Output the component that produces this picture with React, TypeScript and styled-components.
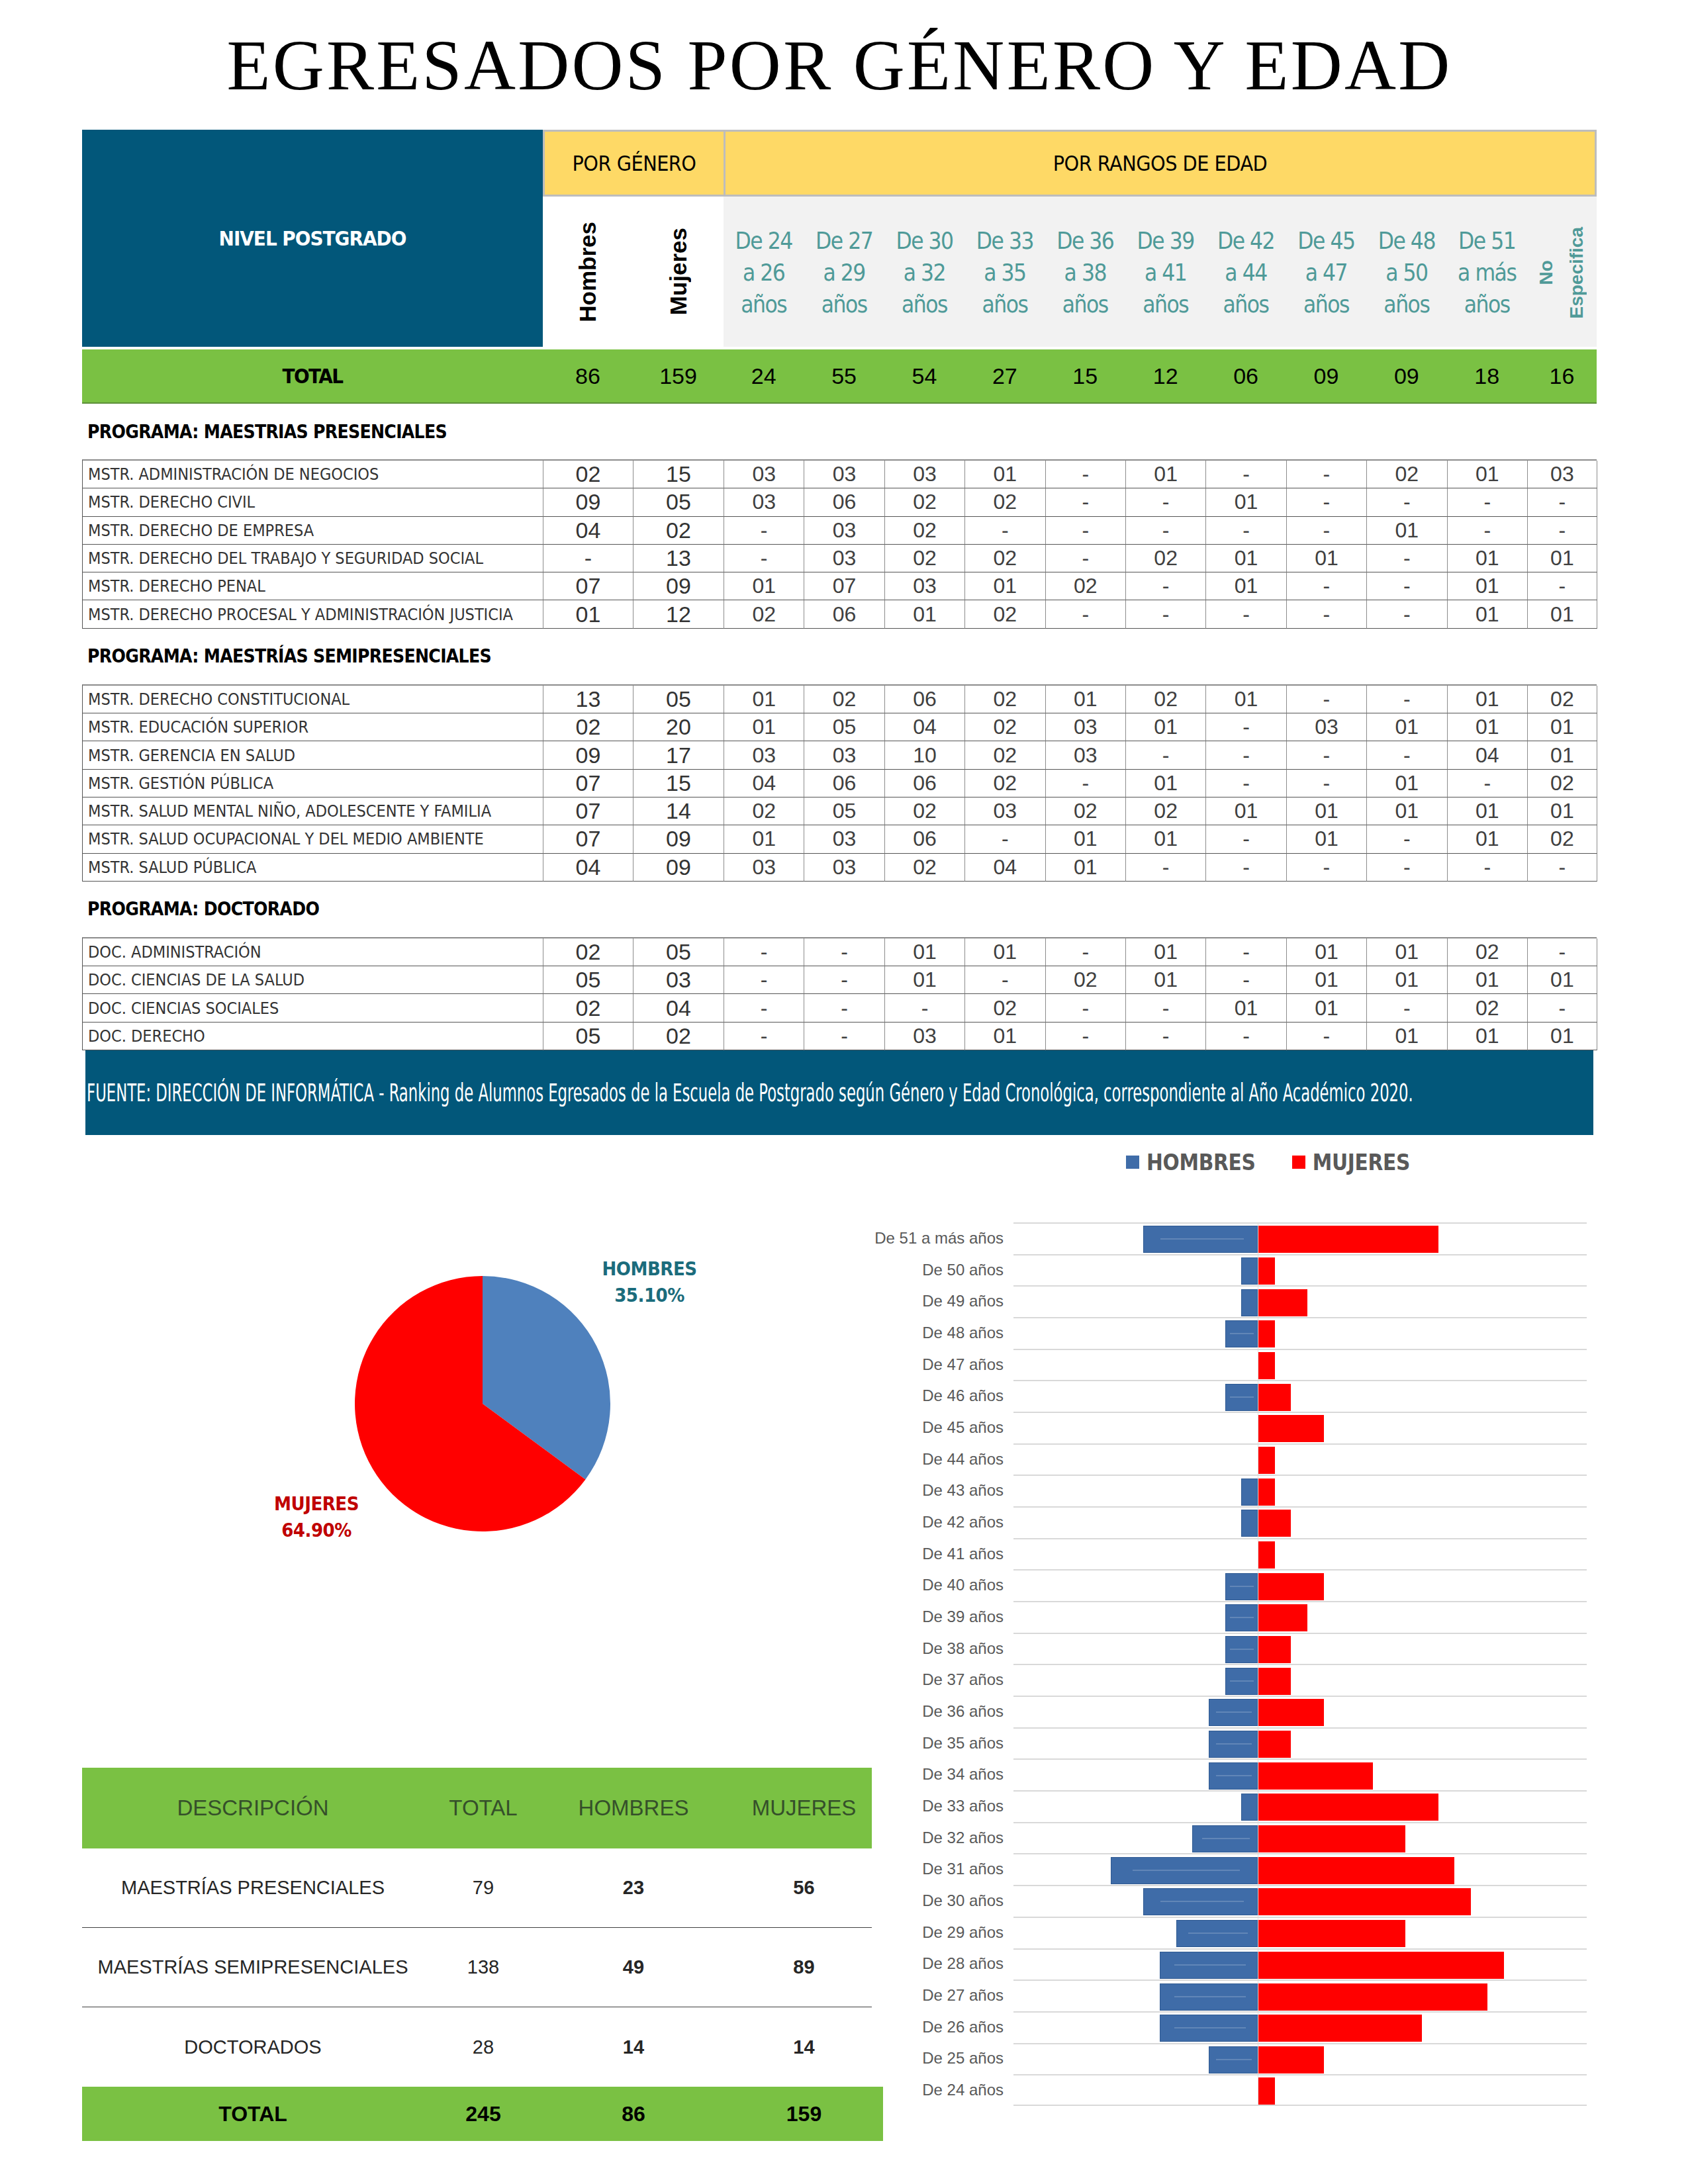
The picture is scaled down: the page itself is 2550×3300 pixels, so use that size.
import React from "react";
import styled, { createGlobalStyle } from "styled-components";

const NARROW = `"Liberation Sans Narrow", "Arial Narrow", "DejaVu Sans Condensed", sans-serif`;
const SANS = `"Liberation Sans", Arial, sans-serif`;
const COLS = "696px 136px 137px repeat(10, 121.4px) 105px";
const NAVY = "#02577a";
const TEAL = "#4f9a98";
const GREEN = "#7ac143";
const YELLOW = "#fed966";

const GlobalStyle = createGlobalStyle`
  html, body { margin: 0; padding: 0; background: #ffffff; }
  body { font-family: ${SANS}; }
`;

const Page = styled.div`
  width: 2550px;
  min-height: 3300px;
  box-sizing: border-box;
  padding: 45px 138px 0 124px;
  background: #fff;
`;

const Title = styled.h1`
  margin: 0 0 43px;
  font-family: "Liberation Serif", "Times New Roman", serif;
  font-weight: 400;
  font-size: 108px;
  line-height: 108px;
  letter-spacing: 3.3px;
  text-align: center;
  color: #000;
`;

/* ---------- header ---------- */
const HeaderGrid = styled.div`
  display: grid;
  grid-template-columns: ${COLS};
  grid-template-rows: 101px 227px;
`;

const NivelCell = styled.div`
  grid-row: 1 / span 2;
  background: ${NAVY};
  color: #fff;
  display: flex;
  align-items: center;
  justify-content: center;
  font-family: ${NARROW};
  font-weight: 700;
  font-size: 31px;
  letter-spacing: -1px;
`;

const GroupCell = styled.div<{ $span: number; $last?: boolean }>`
  grid-column: span ${(p) => p.$span};
  background: ${YELLOW};
  box-sizing: border-box;
  border-top: 3px solid #bdbdbd;
  border-bottom: 3px solid #bdbdbd;
  border-left: 3px solid #bdbdbd;
  border-right: ${(p) => (p.$last ? "3px solid #bdbdbd" : "none")};
  display: flex;
  align-items: center;
  justify-content: center;
  font-family: ${NARROW};
  font-size: 32px;
  color: #000;
  letter-spacing: -0.5px;
`;

const GenderHead = styled.div`
  background: #fff;
  display: flex;
  align-items: center;
  justify-content: center;
`;

const AgeHead = styled.div`
  background: #f2f2f2;
  display: flex;
  flex-direction: column;
  align-items: center;
  justify-content: center;
  font-family: ${NARROW};
  font-size: 35px;
  line-height: 48px;
  letter-spacing: -1.5px;
  color: ${TEAL};
  padding-top: 3px;
`;

const Vertical = styled.span<{ $teal?: boolean }>`
  writing-mode: vertical-rl;
  transform: rotate(180deg);
  font-family: ${SANS};
  font-weight: 700;
  font-size: ${(p) => (p.$teal ? 28 : 35)}px;
  line-height: ${(p) => (p.$teal ? 46 : 40)}px;
  letter-spacing: 0;
  color: ${(p) => (p.$teal ? TEAL : "#000")};
  text-align: center;
  white-space: nowrap;
`;

const TotalRow = styled.div`
  display: grid;
  grid-template-columns: ${COLS};
  height: 82px;
  margin-top: 4px;
  box-sizing: border-box;
  background: ${GREEN};
  border-bottom: 2px solid #5d8f3a;
  align-items: center;
`;

const TotalLabel = styled.div`
  text-align: center;
  font-family: ${NARROW};
  font-weight: 700;
  font-size: 31px;
  color: #000;
  letter-spacing: -1.5px;
`;

const TotalNum = styled.div`
  text-align: center;
  font-family: ${SANS};
  font-size: 34px;
  color: #000;
`;

/* ---------- program tables ---------- */
const SectionTitle = styled.div`
  height: 84px;
  box-sizing: border-box;
  display: flex;
  align-items: center;
  padding-left: 8px;
  font-family: ${NARROW};
  font-weight: 700;
  font-size: 28px;
  color: #000;
  letter-spacing: -0.7px;
`;

const DataTable = styled.div`
  display: grid;
  grid-template-columns: ${COLS};
  grid-auto-rows: 42.3px;
  border-top: 2px solid #8c8c8c;
  border-left: 1px solid #555;
`;

const Cell = styled.div<{ $kind: "name" | "gender" | "age" }>`
  box-sizing: border-box;
  border-right: 1px solid #8c8c8c;
  border-bottom: 1.5px solid #555;
  display: flex;
  align-items: center;
  justify-content: ${(p) => (p.$kind === "name" ? "flex-start" : "center")};
  padding-left: ${(p) => (p.$kind === "name" ? "8px" : "0")};
  white-space: nowrap;
  overflow: hidden;
  font-family: ${(p) => (p.$kind === "name" ? NARROW : SANS)};
  font-size: ${(p) => (p.$kind === "name" ? 25 : p.$kind === "gender" ? 34 : 32)}px;
  color: ${(p) => (p.$kind === "age" ? "#404040" : "#333")};
`;

const SourceBar = styled.div`
  margin: 0 5px;
  height: 128px;
  background: ${NAVY};
  display: flex;
  align-items: center;
  overflow: hidden;
`;

const SourceText = styled.span`
  display: inline-block;
  padding-left: 3px;
  font-family: ${NARROW};
  font-size: 37px;
  color: #fff;
  white-space: nowrap;
  transform: scaleX(0.683);
  transform-origin: left center;
`;

/* ---------- lower part ---------- */
const Lower = styled.div`
  display: grid;
  grid-template-columns: 1193px 1090px;
  column-gap: 5px;
`;

const LeftCol = styled.div`
  display: flex;
  flex-direction: column;
`;

const PieBox = styled.div`
  height: 956px;
`;

const SumRow = styled.div<{ $variant: "head" | "body" | "total"; $divider?: boolean }>`
  display: grid;
  grid-template-columns: 516px 180px 274px 223px;
  align-items: center;
  box-sizing: border-box;
  height: ${(p) => (p.$variant === "head" ? 122 : p.$variant === "total" ? 82 : 120)}px;
  background: ${(p) => (p.$variant === "body" ? "#fff" : GREEN)};
  margin-right: ${(p) => (p.$variant === "total" ? "-17px" : "0")};
  border-bottom: ${(p) => (p.$divider ? "1.5px solid #404040" : "none")};
`;

const SumCell = styled.div<{ $variant: "head" | "body" | "total"; $bold?: boolean; $end?: boolean }>`
  text-align: center;
  font-family: ${SANS};
  white-space: nowrap;
  padding-left: ${(p) => (p.$end ? "18px" : "0")};
  font-size: ${(p) => (p.$variant === "head" ? 33 : p.$variant === "total" ? 32 : 29)}px;
  font-weight: ${(p) => (p.$variant === "total" || p.$bold ? 700 : 400)};
  color: ${(p) => (p.$variant === "head" ? "#35502a" : p.$variant === "total" ? "#000" : "#262626")};
`;

const RightCol = styled.div`
  display: flex;
  flex-direction: column;
`;

const Legend = styled.div`
  margin-top: 21px;
  height: 40px;
  padding-left: 379px;
  display: flex;
  align-items: center;
  gap: 55px;
`;

const LegendItem = styled.div`
  display: flex;
  align-items: center;
  gap: 11px;
  font-family: ${NARROW};
  font-weight: 700;
  font-size: 33px;
  letter-spacing: -0.3px;
  color: #595959;
`;

const Swatch = styled.span<{ $color: string }>`
  width: 20px;
  height: 20px;
  background: ${(p) => p.$color};
  display: inline-block;
`;

const Chart = styled.div`
  margin-top: 71px;
  display: grid;
  grid-template-columns: 194px 866px;
  column-gap: 15px;
  grid-auto-rows: 47.68px;
`;

const BarLabel = styled.div`
  display: flex;
  align-items: center;
  justify-content: flex-end;
  font-family: ${SANS};
  font-size: 24px;
  color: #595959;
  white-space: nowrap;
`;

const Plot = styled.div<{ $last?: boolean }>`
  box-sizing: border-box;
  border-top: 2px solid #d9d9d9;
  border-bottom: ${(p) => (p.$last ? "2px solid #d9d9d9" : "none")};
  display: grid;
  grid-template-columns: 370px 1fr;
`;

const Half = styled.div<{ $left?: boolean }>`
  display: flex;
  align-items: center;
  justify-content: ${(p) => (p.$left ? "flex-end" : "flex-start")};
  border-right: ${(p) => (p.$left ? "1px solid #e3e3e3" : "none")};
  padding-top: 2px;
`;

const UNIT = 24.7;

const Bar = styled.div<{ $value: number; $male?: boolean }>`
  position: relative;
  height: 41px;
  width: ${(p) => p.$value * UNIT}px;
  background: ${(p) => (p.$male ? "#3f6ca8" : "#ff0000")};
  box-shadow: ${(p) => (p.$male ? "inset 0 0 0 1px #2f5a92" : "none")};
  &::after {
    content: "";
    display: ${(p) => (p.$male && p.$value > 1 ? "block" : "none")};
    position: absolute;
    left: 15%;
    right: 12%;
    top: 19px;
    height: 2px;
    background: rgba(255, 255, 255, 0.18);
  }
`;

/* ---------- data ---------- */
type Row = [string, ...string[]];

const AGE_HEADS: [string, string][] = [
  ["24", "26"], ["27", "29"], ["30", "32"], ["33", "35"], ["36", "38"],
  ["39", "41"], ["42", "44"], ["45", "47"], ["48", "50"], ["51", "más"],
];

const TOTALS = ["86", "159", "24", "55", "54", "27", "15", "12", "06", "09", "09", "18", "16"];

const PRESENCIALES: Row[] = [
  ["MSTR. ADMINISTRACIÓN DE NEGOCIOS", "02", "15", "03", "03", "03", "01", "-", "01", "-", "-", "02", "01", "03"],
  ["MSTR. DERECHO CIVIL", "09", "05", "03", "06", "02", "02", "-", "-", "01", "-", "-", "-", "-"],
  ["MSTR. DERECHO DE EMPRESA", "04", "02", "-", "03", "02", "-", "-", "-", "-", "-", "01", "-", "-"],
  ["MSTR. DERECHO DEL TRABAJO Y SEGURIDAD SOCIAL", "-", "13", "-", "03", "02", "02", "-", "02", "01", "01", "-", "01", "01"],
  ["MSTR. DERECHO PENAL", "07", "09", "01", "07", "03", "01", "02", "-", "01", "-", "-", "01", "-"],
  ["MSTR. DERECHO PROCESAL Y ADMINISTRACIÓN JUSTICIA", "01", "12", "02", "06", "01", "02", "-", "-", "-", "-", "-", "01", "01"],
];

const SEMI: Row[] = [
  ["MSTR. DERECHO CONSTITUCIONAL", "13", "05", "01", "02", "06", "02", "01", "02", "01", "-", "-", "01", "02"],
  ["MSTR. EDUCACIÓN SUPERIOR", "02", "20", "01", "05", "04", "02", "03", "01", "-", "03", "01", "01", "01"],
  ["MSTR. GERENCIA EN SALUD", "09", "17", "03", "03", "10", "02", "03", "-", "-", "-", "-", "04", "01"],
  ["MSTR. GESTIÓN PÚBLICA", "07", "15", "04", "06", "06", "02", "-", "01", "-", "-", "01", "-", "02"],
  ["MSTR. SALUD MENTAL NIÑO, ADOLESCENTE Y FAMILIA", "07", "14", "02", "05", "02", "03", "02", "02", "01", "01", "01", "01", "01"],
  ["MSTR. SALUD OCUPACIONAL Y DEL MEDIO AMBIENTE", "07", "09", "01", "03", "06", "-", "01", "01", "-", "01", "-", "01", "02"],
  ["MSTR. SALUD PÚBLICA", "04", "09", "03", "03", "02", "04", "01", "-", "-", "-", "-", "-", "-"],
];

const DOCTORADO: Row[] = [
  ["DOC. ADMINISTRACIÓN", "02", "05", "-", "-", "01", "01", "-", "01", "-", "01", "01", "02", "-"],
  ["DOC. CIENCIAS DE LA SALUD", "05", "03", "-", "-", "01", "-", "02", "01", "-", "01", "01", "01", "01"],
  ["DOC. CIENCIAS SOCIALES", "02", "04", "-", "-", "-", "02", "-", "-", "01", "01", "-", "02", "-"],
  ["DOC. DERECHO", "05", "02", "-", "-", "03", "01", "-", "-", "-", "-", "01", "01", "01"],
];

const AGES: [string, number, number][] = [
  ["De 51 a más años", 7, 11], ["De 50 años", 1, 1], ["De 49 años", 1, 3], ["De 48 años", 2, 1],
  ["De 47 años", 0, 1], ["De 46 años", 2, 2], ["De 45 años", 0, 4], ["De 44 años", 0, 1],
  ["De 43 años", 1, 1], ["De 42 años", 1, 2], ["De 41 años", 0, 1], ["De 40 años", 2, 4],
  ["De 39 años", 2, 3], ["De 38 años", 2, 2], ["De 37 años", 2, 2], ["De 36 años", 3, 4],
  ["De 35 años", 3, 2], ["De 34 años", 3, 7], ["De 33 años", 1, 11], ["De 32 años", 4, 9],
  ["De 31 años", 9, 12], ["De 30 años", 7, 13], ["De 29 años", 5, 9], ["De 28 años", 6, 15],
  ["De 27 años", 6, 14], ["De 26 años", 6, 10], ["De 25 años", 3, 4], ["De 24 años", 0, 1],
];

const SUMMARY: [string, string, string, string][] = [
  ["MAESTRÍAS PRESENCIALES", "79", "23", "56"],
  ["MAESTRÍAS SEMIPRESENCIALES", "138", "49", "89"],
  ["DOCTORADOS", "28", "14", "14"],
];

/* ---------- components ---------- */
const ProgramTable: React.FC<{ rows: Row[] }> = ({ rows }) => (
  <DataTable>
    {rows.map((r) =>
      r.map((v, i) => (
        <Cell key={r[0] + i} $kind={i === 0 ? "name" : i <= 2 ? "gender" : "age"}>
          {v}
        </Cell>
      ))
    )}
  </DataTable>
);

const Pie: React.FC = () => {
  const cx = 605;
  const cy = 406;
  const r = 193;
  const a = 0.351 * Math.PI * 2;
  const ex = cx + r * Math.sin(a);
  const ey = cy - r * Math.cos(a);
  const font = `"Liberation Sans Narrow", "Arial Narrow", "DejaVu Sans Condensed", sans-serif`;
  return (
    <svg width="1193" height="956" viewBox="0 0 1193 956">
      <path d={`M${cx},${cy} L${cx},${cy - r} A${r},${r} 0 0 1 ${ex},${ey} Z`} fill="#4f81bd" />
      <path d={`M${cx},${cy} L${ex},${ey} A${r},${r} 0 1 1 ${cx},${cy - r} Z`} fill="#ff0000" />
      <g fontFamily={font} fontWeight="700" fontSize="29" letterSpacing="-0.5" textAnchor="middle">
        <text x="857" y="212" fill="#1b6c7c">HOMBRES</text>
        <text x="857" y="252" fill="#1b6c7c">35.10%</text>
        <text x="354" y="567" fill="#c00000">MUJERES</text>
        <text x="354" y="607" fill="#c00000">64.90%</text>
      </g>
    </svg>
  );
};

export default function App() {
  return (
    <>
      <GlobalStyle />
      <Page>
        <Title>EGRESADOS POR GÉNERO Y EDAD</Title>

        <HeaderGrid>
          <NivelCell>NIVEL POSTGRADO</NivelCell>
          <GroupCell $span={2}>POR GÉNERO</GroupCell>
          <GroupCell $span={11} $last>POR RANGOS DE EDAD</GroupCell>
          <GenderHead>
            <Vertical>Hombres</Vertical>
          </GenderHead>
          <GenderHead>
            <Vertical>Mujeres</Vertical>
          </GenderHead>
          {AGE_HEADS.map(([a, b]) => (
            <AgeHead key={a}>
              <span>De {a}</span>
              <span>a {b}</span>
              <span>años</span>
            </AgeHead>
          ))}
          <AgeHead>
            <Vertical $teal>
              No
              <br />
              Especifica
            </Vertical>
          </AgeHead>
        </HeaderGrid>

        <TotalRow>
          <TotalLabel>TOTAL</TotalLabel>
          {TOTALS.map((t, i) => (
            <TotalNum key={i}>{t}</TotalNum>
          ))}
        </TotalRow>

        <SectionTitle>PROGRAMA: MAESTRIAS PRESENCIALES</SectionTitle>
        <ProgramTable rows={PRESENCIALES} />
        <SectionTitle>PROGRAMA: MAESTRÍAS SEMIPRESENCIALES</SectionTitle>
        <ProgramTable rows={SEMI} />
        <SectionTitle>PROGRAMA: DOCTORADO</SectionTitle>
        <ProgramTable rows={DOCTORADO} />

        <SourceBar>
          <SourceText>
            FUENTE: DIRECCIÓN DE INFORMÁTICA - Ranking de Alumnos Egresados de la Escuela de Postgrado según Género y Edad
            Cronológica, correspondiente al Año Académico 2020.
          </SourceText>
        </SourceBar>

        <Lower>
          <LeftCol>
            <PieBox>
              <Pie />
            </PieBox>
            <SumRow $variant="head">
              <SumCell $variant="head">DESCRIPCIÓN</SumCell>
              <SumCell $variant="head">TOTAL</SumCell>
              <SumCell $variant="head">HOMBRES</SumCell>
              <SumCell $variant="head" $end>MUJERES</SumCell>
            </SumRow>
            {SUMMARY.map(([d, t, h, m], i) => (
              <SumRow key={d} $variant="body" $divider={i < SUMMARY.length - 1}>
                <SumCell $variant="body">{d}</SumCell>
                <SumCell $variant="body">{t}</SumCell>
                <SumCell $variant="body" $bold>{h}</SumCell>
                <SumCell $variant="body" $bold $end>{m}</SumCell>
              </SumRow>
            ))}
            <SumRow $variant="total">
              <SumCell $variant="total">TOTAL</SumCell>
              <SumCell $variant="total">245</SumCell>
              <SumCell $variant="total">86</SumCell>
              <SumCell $variant="total" $end>159</SumCell>
            </SumRow>
          </LeftCol>

          <RightCol>
            <Legend>
              <LegendItem>
                <Swatch $color="#3f6ca8" />
                HOMBRES
              </LegendItem>
              <LegendItem>
                <Swatch $color="#ff0000" />
                MUJERES
              </LegendItem>
            </Legend>
            <Chart>
              {AGES.map(([label, h, m], i) => (
                <React.Fragment key={label}>
                  <BarLabel>{label}</BarLabel>
                  <Plot $last={i === AGES.length - 1}>
                    <Half $left>{h > 0 && <Bar $value={h} $male />}</Half>
                    <Half>{m > 0 && <Bar $value={m} />}</Half>
                  </Plot>
                </React.Fragment>
              ))}
            </Chart>
          </RightCol>
        </Lower>
      </Page>
    </>
  );
}
